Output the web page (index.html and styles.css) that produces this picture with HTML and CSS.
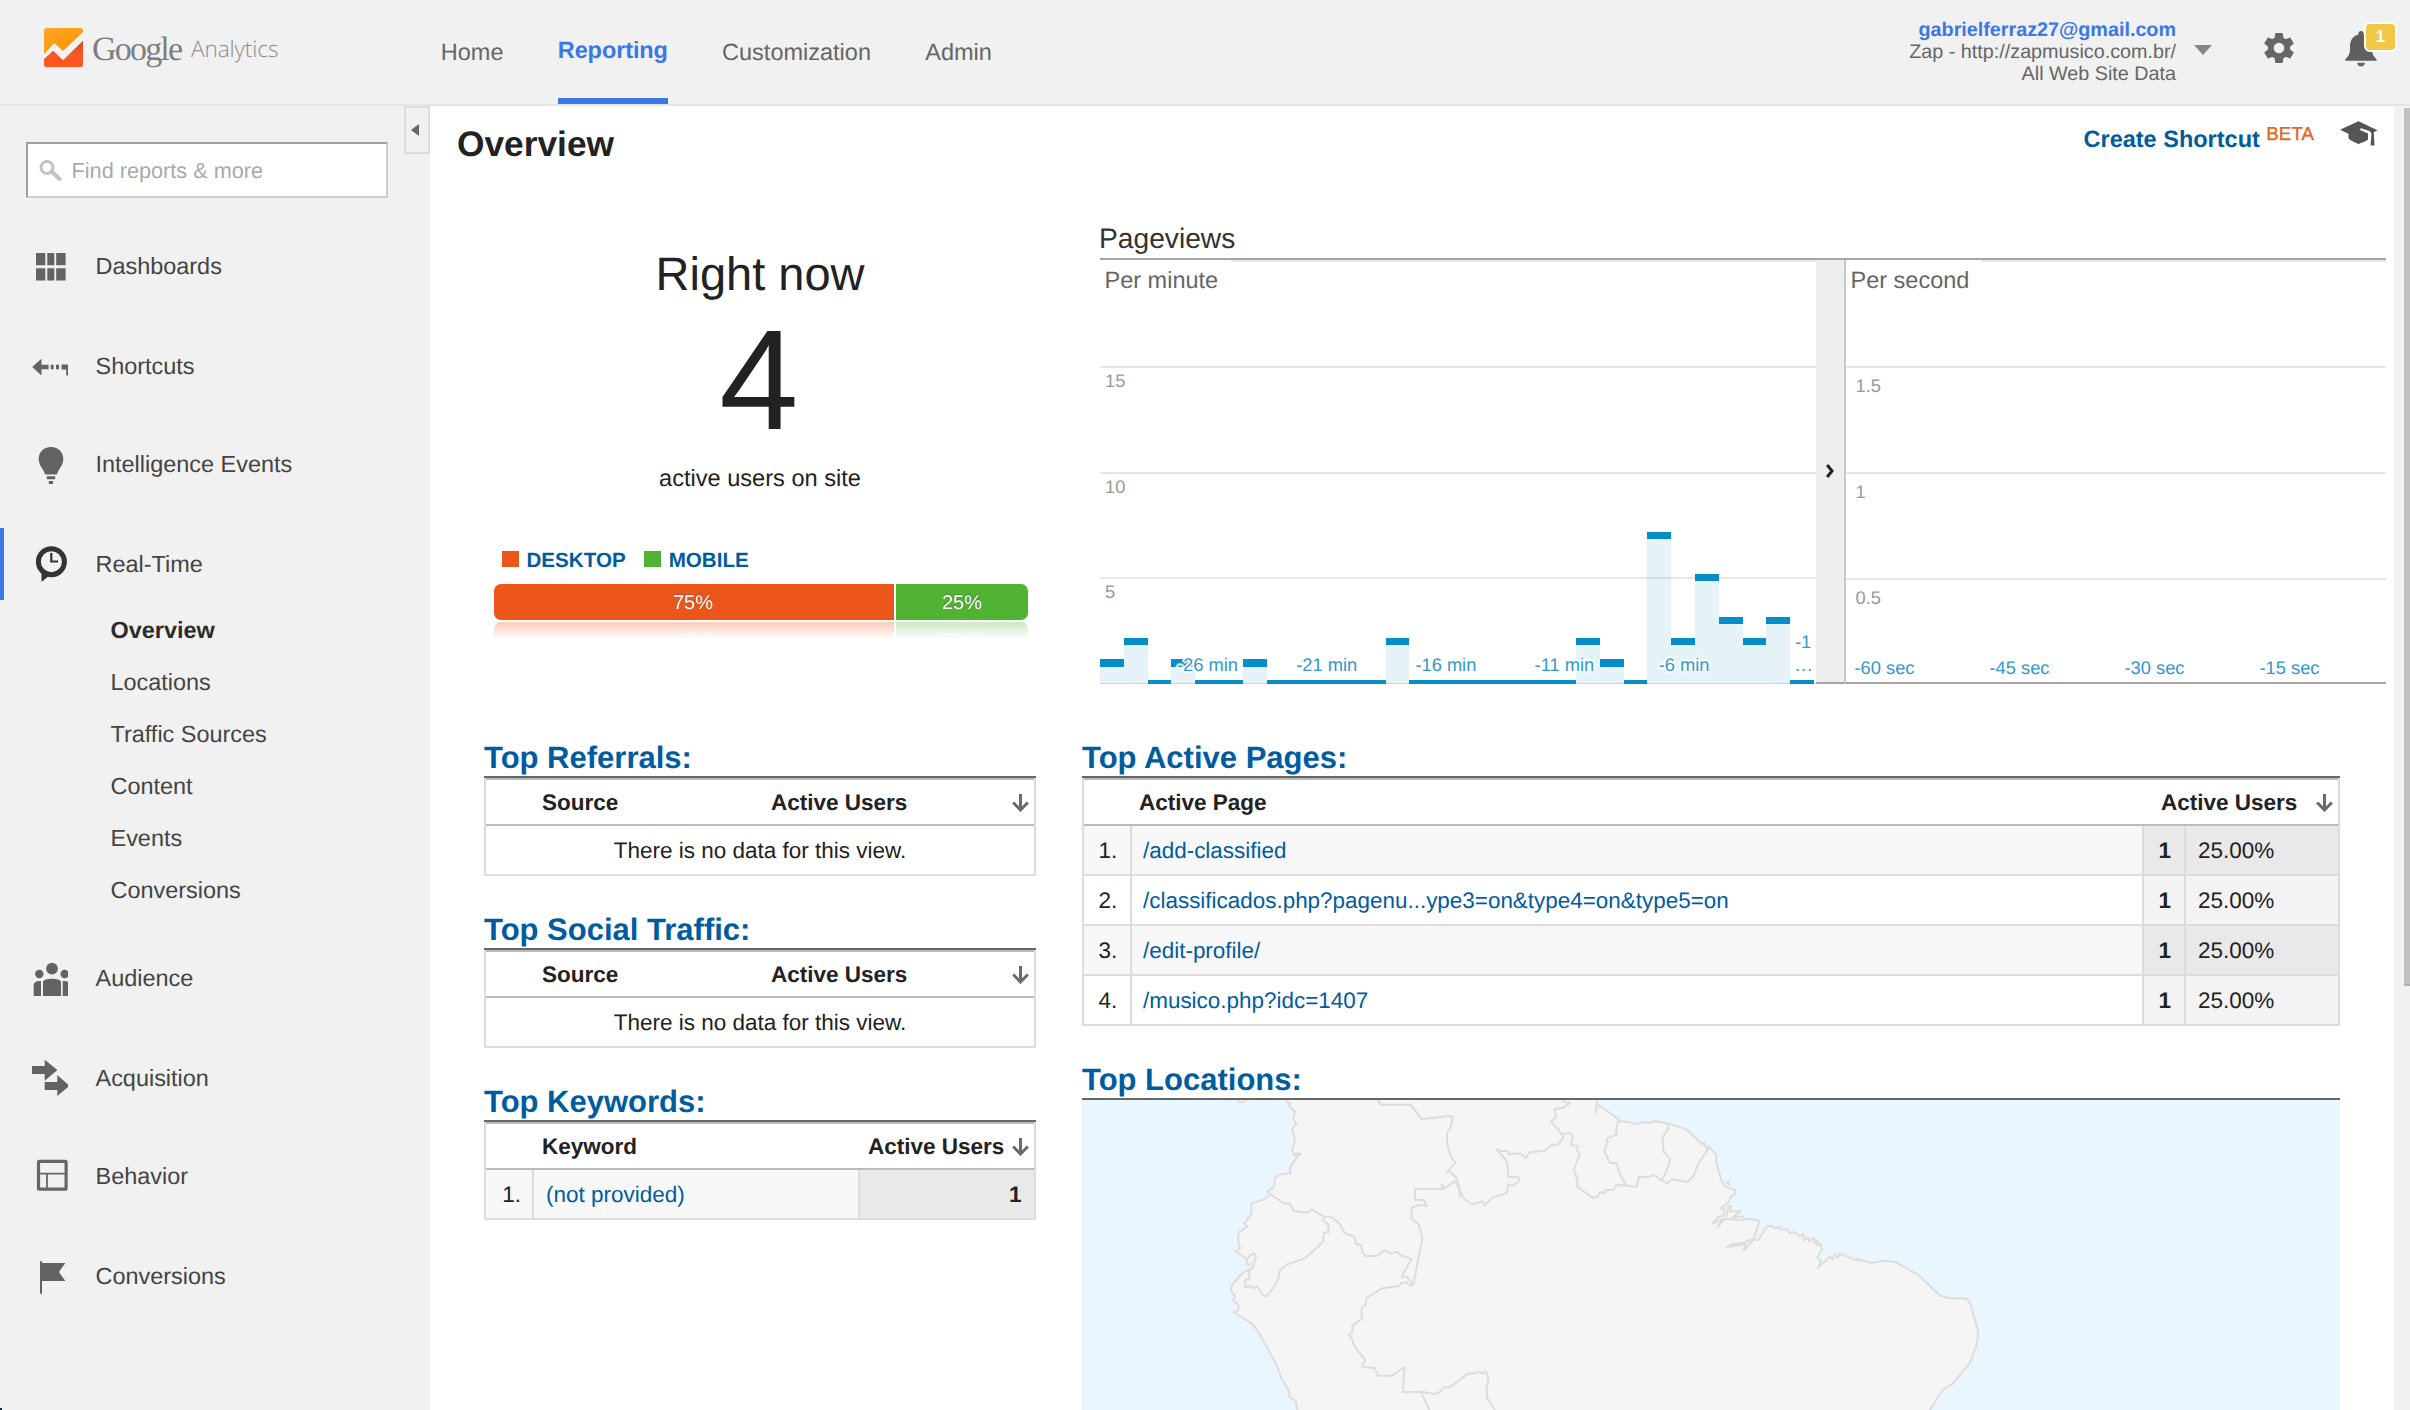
FILE: index.html
```html
<!DOCTYPE html>
<html lang="en">
<head>
<meta charset="utf-8">
<title>Overview - Google Analytics</title>
<link rel="stylesheet" href="styles.css">
</head>
<body>
<header class="topbar">
  <div class="brand">
    <svg class="brand-mark" viewBox="86 84 76 117" preserveAspectRatio="none">
      <defs>
        <linearGradient id="amber" x1="0" y1="0" x2="1" y2="1"><stop offset="0" stop-color="#ffa726"/><stop offset="1" stop-color="#ff9100"/></linearGradient>
        <linearGradient id="ember" x1="0" y1="0" x2="0" y2="1"><stop offset="0" stop-color="#d84a1b"/><stop offset=".55" stop-color="#ff5722"/></linearGradient>
        <clipPath id="mark"><rect x="86" y="84" width="76" height="117" rx="5" ry="8"/></clipPath>
      </defs>
      <g clip-path="url(#mark)">
        <rect x="86" y="84" width="76" height="117" fill="#f5f3f1"/>
        <path d="M86 84H162V96L123 153L106 129L86 162Z" fill="url(#amber)"/>
        <path d="M86 177L104 152L123 181L162 122V201H86Z" fill="url(#ember)"/>
      </g>
    </svg>
    <span class="brand-google">Google</span>
    <span class="brand-product">Analytics</span>
  </div>
  <nav class="tabs">
    <a class="tab">Home</a>
    <a class="tab tab-active">Reporting</a>
    <a class="tab">Customization</a>
    <a class="tab">Admin</a>
  </nav>
  <div class="account">
    <span class="account-mail">gabrielferraz27@gmail.com</span>
    <span>Zap - http://zapmusico.com.br/</span>
    <span>All Web Site Data</span>
  </div>
  <svg class="caret" viewBox="0 0 18 10"><path d="M0 0H18L9 10Z" fill="#868686"/></svg>
  <svg class="gear" viewBox="-15 -15 30 30">
    <g fill="#666">
      <path d="M-3.6 -15H3.6L4.6 -9V9L3.6 15H-3.6L-4.6 9V-9Z"/>
      <path d="M-3.6 -15H3.6L4.6 -9V9L3.6 15H-3.6L-4.6 9V-9Z" transform="rotate(60)"/>
      <path d="M-3.6 -15H3.6L4.6 -9V9L3.6 15H-3.6L-4.6 9V-9Z" transform="rotate(120)"/>
      <circle r="11"/>
    </g>
    <circle r="5.3" fill="#f1f1f1"/>
  </svg>
  <div class="alerts">
    <svg class="bell" viewBox="0 0 32 36">
      <path d="M16 0C18 0 18.6 1.6 18.6 3.4C24.500 5 27 9.500 27 15C27 22 27.500 24.500 31.500 28.200V29.800H0.300V28.200C4.500 24.500 5 22 5 15C5 9.500 7.500 5 13.400 3.400C13.400 1.600 14 0 16 0Z" fill="#5f5f5f"/>
      <path d="M12 31.800H20C19.800 34.200 18 35.400 16 35.400S12.200 34.200 12 31.800Z" fill="#666"/>
    </svg>
    <span class="badge">1</span>
  </div>
</header>

<div class="body">
  <aside class="sidebar">
    <span class="collapse"><svg viewBox="0 0 8 12"><path d="M8 0V12L0 6Z" fill="#666"/></svg></span>
    <div class="search">
      <svg viewBox="0 0 23 21"><circle cx="8" cy="7.500" r="6" fill="none" stroke="#c4c4c4" stroke-width="3"/><path d="M12.500 11.500L20.500 19" stroke="#c4c4c4" stroke-width="4.200" stroke-linecap="round"/></svg>
      <span>Find reports &amp; more</span>
    </div>
    <nav class="menu">
      <a class="item"><svg viewBox="32 246 36 40"><path d="M36 253H45.300V265.300H36ZM47.300 253H54.300V265.300H47.300ZM56.200 253H65.600V265.300H56.200ZM36 268.300H45.300V280.600H36ZM47.300 268.300H54.300V280.600H47.300ZM56.200 268.300H65.600V280.600H56.200Z"/></svg>Dashboards</a>
      <a class="item"><svg viewBox="32 346 36 40"><path d="M32.200 367L41.500 358.700V364.700H48.600V369.300H41.500V375.500ZM50.700 364.700H53.600V369.300H50.700ZM56 364.700H59V369.300H56ZM61.600 364.500H68V375.500H66.200V369.500H61.600Z"/></svg>Shortcuts</a>
      <a class="item"><svg viewBox="32 444 36 40"><path d="M51 447C58.500 447 63.300 452 63.300 459C63.300 465.500 59 468.500 57.500 473C57.200 474 56.500 474.500 55.800 474.500H46.200C45.500 474.500 44.800 474 44.500 473C43 468.500 38.700 465.500 38.700 459C38.700 452 43.500 447 51 447ZM46.800 476.200H55.200V479.200H46.800ZM48.800 481H53V484H48.800Z"/></svg>Intelligence Events</a>
      <a class="item item-active"><svg viewBox="32 544 36 40"><path d="M41.500 569V582L50 575Z" fill="#333"/><circle cx="51.400" cy="561.700" r="13" fill="none" stroke="#333" stroke-width="5"/><path d="M51.300 553V561.500H58" fill="none" stroke="#333" stroke-width="2.200"/></svg>Real-Time</a>
      <div class="submenu">
        <a class="current">Overview</a>
        <a>Locations</a>
        <a>Traffic Sources</a>
        <a>Content</a>
        <a>Events</a>
        <a>Conversions</a>
      </div>
      <a class="item"><svg viewBox="32 958 36 40"><circle cx="52" cy="968.700" r="5.900"/><circle cx="39.300" cy="974" r="4.200"/><circle cx="64.700" cy="974" r="4.200"/><path d="M43 996V982C43 977.500 61 977.500 61 982V996ZM33.700 996V986C33.700 982 36 981 41 981V996ZM62.700 996V981C66 981 68 981.500 68 982V996Z"/></svg>Audience</a>
      <a class="item"><svg viewBox="32 1058 36 40"><path d="M32 1066H44.700V1059.700L57.400 1070L44.700 1080.700V1074H32ZM44.700 1082H57.300V1075L69.500 1085.700L57.300 1096V1090H44.700Z"/></svg>Acquisition</a>
      <a class="item"><svg viewBox="32 1156 36 40"><rect x="38.500" y="1161.300" width="27.600" height="27.900" rx="1" fill="none" stroke="#666" stroke-width="3.200"/><path d="M38 1173.700H66M47 1174V1189" fill="none" stroke="#666" stroke-width="1.800"/></svg>Behavior</a>
      <a class="item"><svg viewBox="32 1256 36 40"><path d="M40 1261.300H42V1263H65.300L59 1272L65.300 1281H42V1293.700H40Z"/></svg>Conversions</a>
    </nav>
  </aside>

  <main class="content">
    <div class="toolbar">
      <h1>Overview</h1>
      <div class="actions">
        <a class="shortcut">Create Shortcut</a>
        <span class="beta">BETA</span>
        <svg class="cap" viewBox="0 0 38 25"><path d="M18.500 0.300L37.500 9.300L33.800 11.200L34.500 24.500H30.500L31.500 12.500L29.500 10L21 7.200L19.500 8.800L28 12.500V18.500C26 20.500 20 22 18.500 23.200C16 21.500 10 19.500 8.500 17.200V12.800L0 8.800Z" fill="#555"/></svg>
      </div>
    </div>

    <div class="summary">
      <section class="now">
        <p class="now-title">Right now</p>
        <p class="now-count">4</p>
        <p class="now-label">active users on site</p>
        <div class="legend">
          <span class="swatch swatch-desktop"></span><a>DESKTOP</a>
          <span class="swatch swatch-mobile"></span><a>MOBILE</a>
        </div>
        <div class="split">
          <span class="split-desktop">75%</span>
          <span class="split-mobile">25%</span>
        </div>
      </section>

      <section class="pageviews">
        <h2>Pageviews</h2>
        <div class="charts">
          <div class="minute">
            <div class="grid"><div class="cell"></div><div class="cell">15</div><div class="cell">10</div><div class="cell">5</div></div>
            <span class="chart-name">Per minute</span>
            <div class="bars">
              <i style="--v:1"></i><i style="--v:2"></i><i style="--v:0"></i><i style="--v:1"></i><i style="--v:0"></i><i style="--v:0"></i><i style="--v:1"></i><i style="--v:0"></i><i style="--v:0"></i><i style="--v:0"></i>
              <i style="--v:0"></i><i style="--v:0"></i><i style="--v:2"></i><i style="--v:0"></i><i style="--v:0"></i><i style="--v:0"></i><i style="--v:0"></i><i style="--v:0"></i><i style="--v:0"></i><i style="--v:0"></i>
              <i style="--v:2"></i><i style="--v:1"></i><i style="--v:0"></i><i style="--v:7"></i><i style="--v:2"></i><i style="--v:5"></i><i style="--v:3"></i><i style="--v:2"></i><i style="--v:3"></i><i style="--v:0"></i>
            </div>
            <div class="ticks"><span>-26 min</span><span>-21 min</span><span>-16 min</span><span>-11 min</span><span>-6 min</span></div>
            <div class="last-tick">-1<br><span class="dots">...</span></div>
          </div>
          <div class="divider"><svg viewBox="0 0 8 14"><path d="M1.200 1L6 7L1.200 13" fill="none" stroke="#222" stroke-width="3"/></svg></div>
          <div class="second">
            <div class="grid"><div class="cell"></div><div class="cell">1.5</div><div class="cell">1</div><div class="cell">0.5</div></div>
            <span class="chart-name">Per second</span>
            <div class="ticks"><span>-60 sec</span><span>-45 sec</span><span>-30 sec</span><span>-15 sec</span></div>
          </div>
        </div>
      </section>
    </div>

    <div class="reports">
      <div class="column column-narrow">
        <section class="report">
          <h3>Top Referrals:</h3>
          <div class="table">
            <div class="head"><b class="name">Source</b><b class="metric metric-wide">Active Users</b><svg class="arrow" viewBox="0 0 17 18"><path d="M8.500 0V16M1.200 8.500L8.500 16L15.800 8.500" fill="none" stroke="#6b6b6b" stroke-width="3"/></svg></div>
            <div class="empty">There is no data for this view.</div>
          </div>
        </section>
        <section class="report">
          <h3>Top Social Traffic:</h3>
          <div class="table">
            <div class="head"><b class="name">Source</b><b class="metric metric-wide">Active Users</b><svg class="arrow" viewBox="0 0 17 18"><path d="M8.500 0V16M1.200 8.500L8.500 16L15.800 8.500" fill="none" stroke="#6b6b6b" stroke-width="3"/></svg></div>
            <div class="empty">There is no data for this view.</div>
          </div>
        </section>
        <section class="report">
          <h3>Top Keywords:</h3>
          <div class="table">
            <div class="head"><b class="name">Keyword</b><b class="metric">Active Users</b><svg class="arrow" viewBox="0 0 17 18"><path d="M8.500 0V16M1.200 8.500L8.500 16L15.800 8.500" fill="none" stroke="#6b6b6b" stroke-width="3"/></svg></div>
            <div class="row"><span class="index">1.</span><a class="link">(not provided)</a><b class="total">1</b></div>
          </div>
        </section>
      </div>

      <div class="column column-wide">
        <section class="report pages">
          <h3>Top Active Pages:</h3>
          <div class="table">
            <div class="head"><b class="name">Active Page</b><b class="metric">Active Users</b><svg class="arrow" viewBox="0 0 17 18"><path d="M8.500 0V16M1.200 8.500L8.500 16L15.800 8.500" fill="none" stroke="#6b6b6b" stroke-width="3"/></svg></div>
            <div class="row"><span class="index">1.</span><a class="link">/add-classified</a><b class="count">1</b><span class="share">25.00%</span></div>
            <div class="row"><span class="index">2.</span><a class="link">/classificados.php?pagenu...ype3=on&amp;type4=on&amp;type5=on</a><b class="count">1</b><span class="share">25.00%</span></div>
            <div class="row"><span class="index">3.</span><a class="link">/edit-profile/</a><b class="count">1</b><span class="share">25.00%</span></div>
            <div class="row"><span class="index">4.</span><a class="link">/musico.php?idc=1407</a><b class="count">1</b><span class="share">25.00%</span></div>
          </div>
        </section>
        <section class="report">
          <h3>Top Locations:</h3>
          <svg class="map" viewBox="20 180 2055 930" preserveAspectRatio="none">
            <g class="land">
              <path d="M352 174L355 187L360 190L358 198L368 215L365 235L370 252L363 268L367 290L367 310L363 328L368 348L371 340L377 342L371 352L359 385L361 400L346 402L336 412L333 442L323 455L327 465L318 478L297 490L297 523L285 550L290 560L276 577L275 600L278 625L271 635L290 657L295 645L301 640L304 650L302 665L300 682L283 698L265 735L263 752L270 770L267 782L276 795L275 812L267 816L297 850L307 872L338 975L346 1015L358 1053L360 1073L369 1083L373 1120H1402L1415 1080L1427 1048L1441 1033L1470 970L1482 912L1484 875L1471 790L1465 776L1435 774L1421 766L1387 706L1350 667L1333 662L1309 669L1286 657L1287 662L1257 641L1255 653L1249 643L1246 658L1241 650L1222 685L1227 663L1221 652L1229 630L1227 612L1221 615L1222 601L1217 608L1216 594L1208 604L1206 592L1200 601L1198 582L1193 588L1183 576L1175 580L1172 567L1162 569L1160 560L1153 566L1146 557L1138 560L1128 590L1125 601L1118 597L1101 632L1104 613L1073 622L1082 612L1098 610L1117 596L1127 543L1112 536L1092 540L1070 536L1058 562L1066 538L1050 550L1060 530L1068 527L1070 510L1064 505L1077 485L1080 470L1086 465L1087 451L1071 440L1066 428L1056 370L1056 345L1044 320L1041 330L1036 307L1033 313L1008 269L979 251L954 242L952 248L933 247L929 253L902 243L897 246L896 237L861 192L859 221L862 174Z"/>
              <path d="M255 179L258 182M274 180L276 186L286 185L288 179M290 657L288 668L291 674L298 671M1071 430L1076 424L1077 437M1073 530L1076 500L1080 497L1079 515L1096 513L1082 533L1099 529L1100 540"/>
            </g>
            <g class="border">
              <path d="M502 174L508 194H557L575 238L618 228L626 232L622 264L616 280L617 318L623 350L630 368L616 396L622 397L632 415L637 448L643 474L657 494L674 484L678 497L690 473L714 459L716 433L723 437L734 424L733 412L716 410L715 370L711 357L697 327L704 333L715 333L718 343L736 340L745 355L751 337L776 332L788 314L797 314L806 294L804 282L786 245L795 230L792 207L806 203L817 189L806 186L807 174"/>
              <path d="M804 282L818 279L822 290L819 315L830 319L829 332L833 343L823 390L829 417L829 440L854 474L862 470L866 457L874 459L876 450L888 450L893 435L908 436L926 441L930 410L943 412L954 405L968 422L976 430L984 418L1009 426L1019 408L1027 370L1041 334L1044 320"/>
              <path d="M896 237L892 275L894 284L877 296L879 307L873 332L882 368L893 370L897 395L908 434"/>
              <path d="M979 251L977 268L968 294L970 335L981 358L974 396L968 418"/>
              <path d="M325 459L350 490L360 492L366 513L388 518L396 509L416 530L426 530L441 551L449 579L465 591L468 612L476 616L478 637L484 648H501L515 631L524 641L534 635L542 647L558 657L542 710L552 712L561 735L576 595L570 553L558 536L559 502L573 495L583 498L579 480H564V447H610L607 433L614 444L629 423L637 448V473"/>
              <path d="M416 530L413 540L422 553L423 576L415 578L414 605L386 653L354 674L343 692L341 715L332 745L322 768H317L306 740L300 744L292 738L287 743L286 722L294 715L292 693L300 682"/>
              <path d="M561 735L556 737L551 727L541 730L538 738L510 745L485 774L483 796L477 805V837L462 857L461 880L456 884L463 903V912L470 932L483 960L477 980L498 984L503 1007H527L547 981L544 1057L574 1055L596 1062L605 1056L611 1041L620 1043L649 1003L670 996L675 1000L680 994L684 1020L681 1045L682 1075L693 1105L697 1120"/>
              <path d="M574 1057L590 1120"/>
            </g>
          </svg>
        </section>
      </div>
    </div>
  </main>
  <div class="scrollbar"><div class="thumb"></div></div>
</div>
</body>
</html>
```
FILE: styles.css
```css
* { box-sizing: border-box; }

body {
  margin: 0;
  width: 2410px;
  height: 1410px;
  overflow: hidden;
  background: #fff;
  color: #222;
  font-family: "Liberation Sans", Arial, sans-serif;
  font-size: 22.5px;
  text-rendering: geometricPrecision;
}

h1, h2, h3, p { margin: 0; font-weight: normal; }
svg { display: block; flex: none; }

/* Top bar */
.topbar {
  display: flex;
  align-items: flex-start;
  height: 106px;
  background: #f1f1f1;
  border-bottom: 2px solid #e5e5e5;
}
.brand {
  display: flex;
  width: 440.8px;
  padding: 28px 0 0 44px;
  color: #8b8d90;
  white-space: nowrap;
}
.brand-mark { width: 39px; height: 39px; }
.brand-google {
  width: 98px;
  margin-left: 9px;
  font: 34px/43px "Liberation Serif", serif;
  letter-spacing: -1.8px;
  color: #7b7e82;
}
.brand-product {
  margin-top: 1px;
  margin-left: 1px;
  font: 300 22.6px/40px "Open Sans", sans-serif;
  letter-spacing: -.1px;
}
.tabs { display: flex; gap: 54.3px; }
.tab {
  height: 104px;
  padding-top: 32px;
  font-size: 23.5px;
  line-height: 40px;
  color: #666;
}
.tab-active {
  width: 110px;
  padding-top: 30px;
  border-bottom: 6px solid #3b78e7;
  color: #3b78e7;
  font-weight: bold;
  letter-spacing: -.1px;
}
.account {
  display: flex;
  flex-direction: column;
  align-items: flex-end;
  width: 300px;
  margin-left: auto;
  padding-top: 19px;
  font-size: 19.75px;
  line-height: 22px;
  color: #666;
  white-space: nowrap;
}
.account-mail { color: #3b78e7; font-weight: bold; }
.caret { width: 18px; height: 10px; margin: 45px 0 0 18px; }
.gear { width: 30px; height: 30px; margin: 33px 0 0 52px; }
.alerts { position: relative; width: 65px; margin: 31px 0 0 51px; }
.bell { width: 32px; height: 36px; }
.badge {
  position: absolute;
  top: -9px;
  left: 19px;
  width: 33px;
  height: 30px;
  border: 2px solid #fff;
  border-radius: 6px;
  background: #f2c746;
  color: #fff;
  font: bold 17px/26px "Liberation Sans", sans-serif;
  text-align: center;
}

.body { display: flex; height: 1304px; }

/* Sidebar */
.sidebar {
  position: relative;
  flex: none;
  width: 430px;
  background: #f1f1f1;
}
.sidebar::after {
  content: "";
  position: absolute;
  left: 0;
  bottom: 0;
  width: 2px;
  height: 2px;
  background: #14283a;
}
.collapse {
  display: flex;
  align-items: center;
  justify-content: center;
  width: 26px;
  height: 48px;
  margin-left: auto;
  border: 2px solid #ddd;
}
.collapse svg { width: 8px; height: 12px; margin-right: 4px; }
.search {
  display: flex;
  align-items: center;
  width: 362px;
  height: 56px;
  margin: -12px 0 0 26px;
  padding-left: 11px;
  border: 2px solid #ccc;
  border-top-color: #a0a0a0;
  border-left-color: #a0a0a0;
  background: #fff;
  font-size: 21.7px;
  line-height: 26px;
  color: #aaa;
}
.search svg { width: 23px; height: 21px; margin-right: 9.5px; }
.search span { padding-top: 1px; }
.menu { padding-top: 32px; }
.item {
  display: flex;
  align-items: center;
  gap: 27.5px;
  height: 72px;
  margin-bottom: 28px;
  padding-left: 32px;
  font-size: 23.45px;
  color: #444;
}
.item:nth-of-type(2), .item:nth-of-type(6) { margin-bottom: 26px; }
.item svg { width: 36px; height: 40px; fill: #636363; }
.item-active {
  margin-bottom: 4px;
  padding-left: 28px;
  border-left: 4px solid #3b78e7;
}
.submenu {
  display: flex;
  flex-direction: column;
  margin-bottom: 26px;
  padding-left: 110.5px;
  font-size: 23.45px;
  line-height: 52px;
  color: #444;
}
.submenu .current { color: #2b2b2b; font-weight: bold; }

/* Main area */
.content { width: 1964px; }
.toolbar {
  display: flex;
  justify-content: space-between;
  height: 76px;
  padding: 0 16px 0 27px;
}
h1 { font-size: 35.3px; font-weight: bold; line-height: 77px; }
.actions { display: flex; align-items: flex-start; }
.shortcut {
  margin-top: 12.5px;
  font-size: 23.5px;
  font-weight: bold;
  line-height: 40px;
  color: #015c9f;
}
.beta {
  margin: 8px 0 0 6.5px;
  font-size: 18.8px;
  line-height: 40px;
  color: #de6b1f;
  -webkit-text-stroke: .4px #de6b1f;
}
.cap { width: 38px; height: 25px; margin: 15px 0 0 26px; }

.summary { display: flex; }
.now {
  width: 552px;
  margin-left: 54px;
  padding-top: 62px;
  text-align: center;
}
.now-title { font-size: 47px; line-height: 60px; }
.now-count { margin: 17px 2px 0 0; font-size: 142.5px; line-height: 120px; }
.now-label { margin-top: 23px; font-size: 23.6px; line-height: 30px; }
.legend {
  display: flex;
  align-items: center;
  height: 24px;
  margin: 54px 0 0 18px;
  color: #015c9f;
  font-size: 20.6px;
  font-weight: bold;
}
.legend a { padding-top: 2px; }
.swatch { width: 17px; height: 16px; margin: -2px 7.5px 0 0; }
.swatch-desktop { background: #ed561b; }
.swatch-mobile { margin-left: 18.5px; background: #50b432; }
.split {
  display: flex;
  gap: 2px;
  width: 534px;
  height: 36px;
  margin: 12px 0 0 10px;
  border-radius: 7px;
  overflow: hidden;
  color: #fff;
  font-size: 20px;
  line-height: 38px;
  text-shadow: 0 -1px 1px rgba(90, 90, 90, .7);
  -webkit-box-reflect: below 2px linear-gradient(transparent 52%, rgba(0, 0, 0, .3));
}
.split-desktop { width: 400px; padding-right: 2px; background: #ed561b; }
.split-mobile { width: 132px; background: #50b432; }

.pageviews { width: 1286px; margin-left: 64px; padding-top: 36px; }
h2 {
  border-bottom: 2px solid #a6a6a6;
  font-size: 28.2px;
  line-height: 40px;
  color: #333;
  text-indent: -1px;
}
.charts { display: flex; height: 424px; }
.minute, .second {
  position: relative;
  font-size: 18.3px;
}
.minute { width: 716px; border-bottom: 1px solid #ddd; }
.second { width: 540px; border-bottom: 2px solid #a6a6a6; }
.grid { display: grid; grid-template-rows: 106px 106px 105px 105px; }
.cell {
  padding: 3px 0 0 5px;
  border-top: 2px solid #e6e6e6;
  line-height: 20px;
  color: #999;
}
.second .grid { grid-template-rows: 106px 106px 106px 104px; }
.second .cell { padding: 7.5px 0 0 9.500px; }
.chart-name {
  position: absolute;
  top: 0;
  left: 0;
  padding: 0 13px 0 4.5px;
  background: #fff;
  font-size: 23.5px;
  line-height: 40px;
  color: #666;
}
.bars {
  position: absolute;
  left: 0;
  right: 2px;
  bottom: -1px;
  display: grid;
  grid-template-columns: repeat(30, 1fr);
  align-items: end;
}
.bars i {
  height: calc(3.800px + var(--v) * 21.150px);
  background: linear-gradient(#058dc7 7.500px, rgba(5, 141, 199, .1) 7.500px);
}
.ticks {
  position: absolute;
  left: 77px;
  bottom: 8px;
  display: flex;
  line-height: 20px;
  color: #3398cc;
  text-shadow: 2px 0 1px #fff, -2px 0 1px #fff, 0 2px 1px #fff, 0 -2px 1px #fff, 1px 1px 0 #fff, -1px -1px 0 #fff, 1px -1px 0 #fff, -1px 1px 0 #fff;
}
.ticks span { width: 119.200px; }
.ticks span:last-child { padding-left: 5px; }
.second .ticks { left: 8.500px; bottom: 4px; }
.second .ticks span { width: 135px; padding: 0; }
.last-tick {
  position: absolute;
  left: 695px;
  bottom: 7px;
  line-height: 23px;
  color: #3398cc;
}
.dots { letter-spacing: 1px; }
.divider {
  display: flex;
  align-items: center;
  width: 30px;
  padding-left: 10px;
  border-right: 2px solid #c8c8c8;
  border-bottom: 2px solid #a6a6a6;
  background: #eee;
}
.divider svg { width: 8px; height: 14px; }

/* Report tables */
.reports { display: flex; margin-top: 54px; padding-left: 54px; }
.column { display: flex; flex-direction: column; gap: 34px; }
.column-narrow { width: 552px; }
.column-wide { width: 1258px; margin-left: 46px; }
h3 {
  height: 40px;
  border-bottom: 2px solid #666;
  font-size: 31px;
  font-weight: bold;
  line-height: 40px;
  color: #015c9f;
}
.table { border: solid #ddd; border-width: 0 2px; }
.head {
  display: flex;
  align-items: center;
  height: 48px;
  border: solid #bbb;
  border-width: 2px 0;
}
.head b { padding-top: 2px; }
.name { flex: 1; padding-left: 56px; }
.metric { width: 144px; }
.metric-wide { width: 241px; }
.arrow { width: 17px; height: 18px; margin: 2px 5px 0 0; }
.empty, .row { height: 50px; border-bottom: 2px solid #ddd; line-height: 50px; }
.empty { text-align: center; }
.row { display: flex; }
.row > * { height: 48px; }
.row > * + * { border-left: 2px solid #ddd; }
.row:nth-child(even) { background: #f8f8f8; }
.index { width: 46px; padding-right: 11px; text-align: right; }
.link { flex: 1; padding-left: 12px; color: #015c9f; }
.total { width: 176px; padding-right: 12.5px; background: #e9e9e9; text-align: right; }
.pages .name { padding-left: 55px; }
.pages .metric { width: 155px; }
.pages .index { padding-right: 0; padding-left: 14.5px; text-align: left; }
.pages .link { padding-left: 11px; font-size: 22.45px; }
.count { width: 42px; padding-left: 14.5px; background: #f3f3f3; }
.share { width: 154px; padding-left: 12px; background: #f3f3f3; }
.row:nth-child(even) .count, .row:nth-child(even) .share { background: #e9e9e9; }

/* Map */
.map { width: 1258px; height: 310px; background: #e9f6fe; }
.map path { stroke: #ddd; stroke-width: 2px; stroke-linejoin: round; vector-effect: non-scaling-stroke; }
.land { fill: #f5f5f5; }
.map .border { fill: none; }

.scrollbar { width: 16px; padding: 2px 0 0 10px; background: #f1f1f1; }
.thumb { height: 878px; background: #c1c1c1; border-bottom: 2px solid #b0b0b0; }
```
